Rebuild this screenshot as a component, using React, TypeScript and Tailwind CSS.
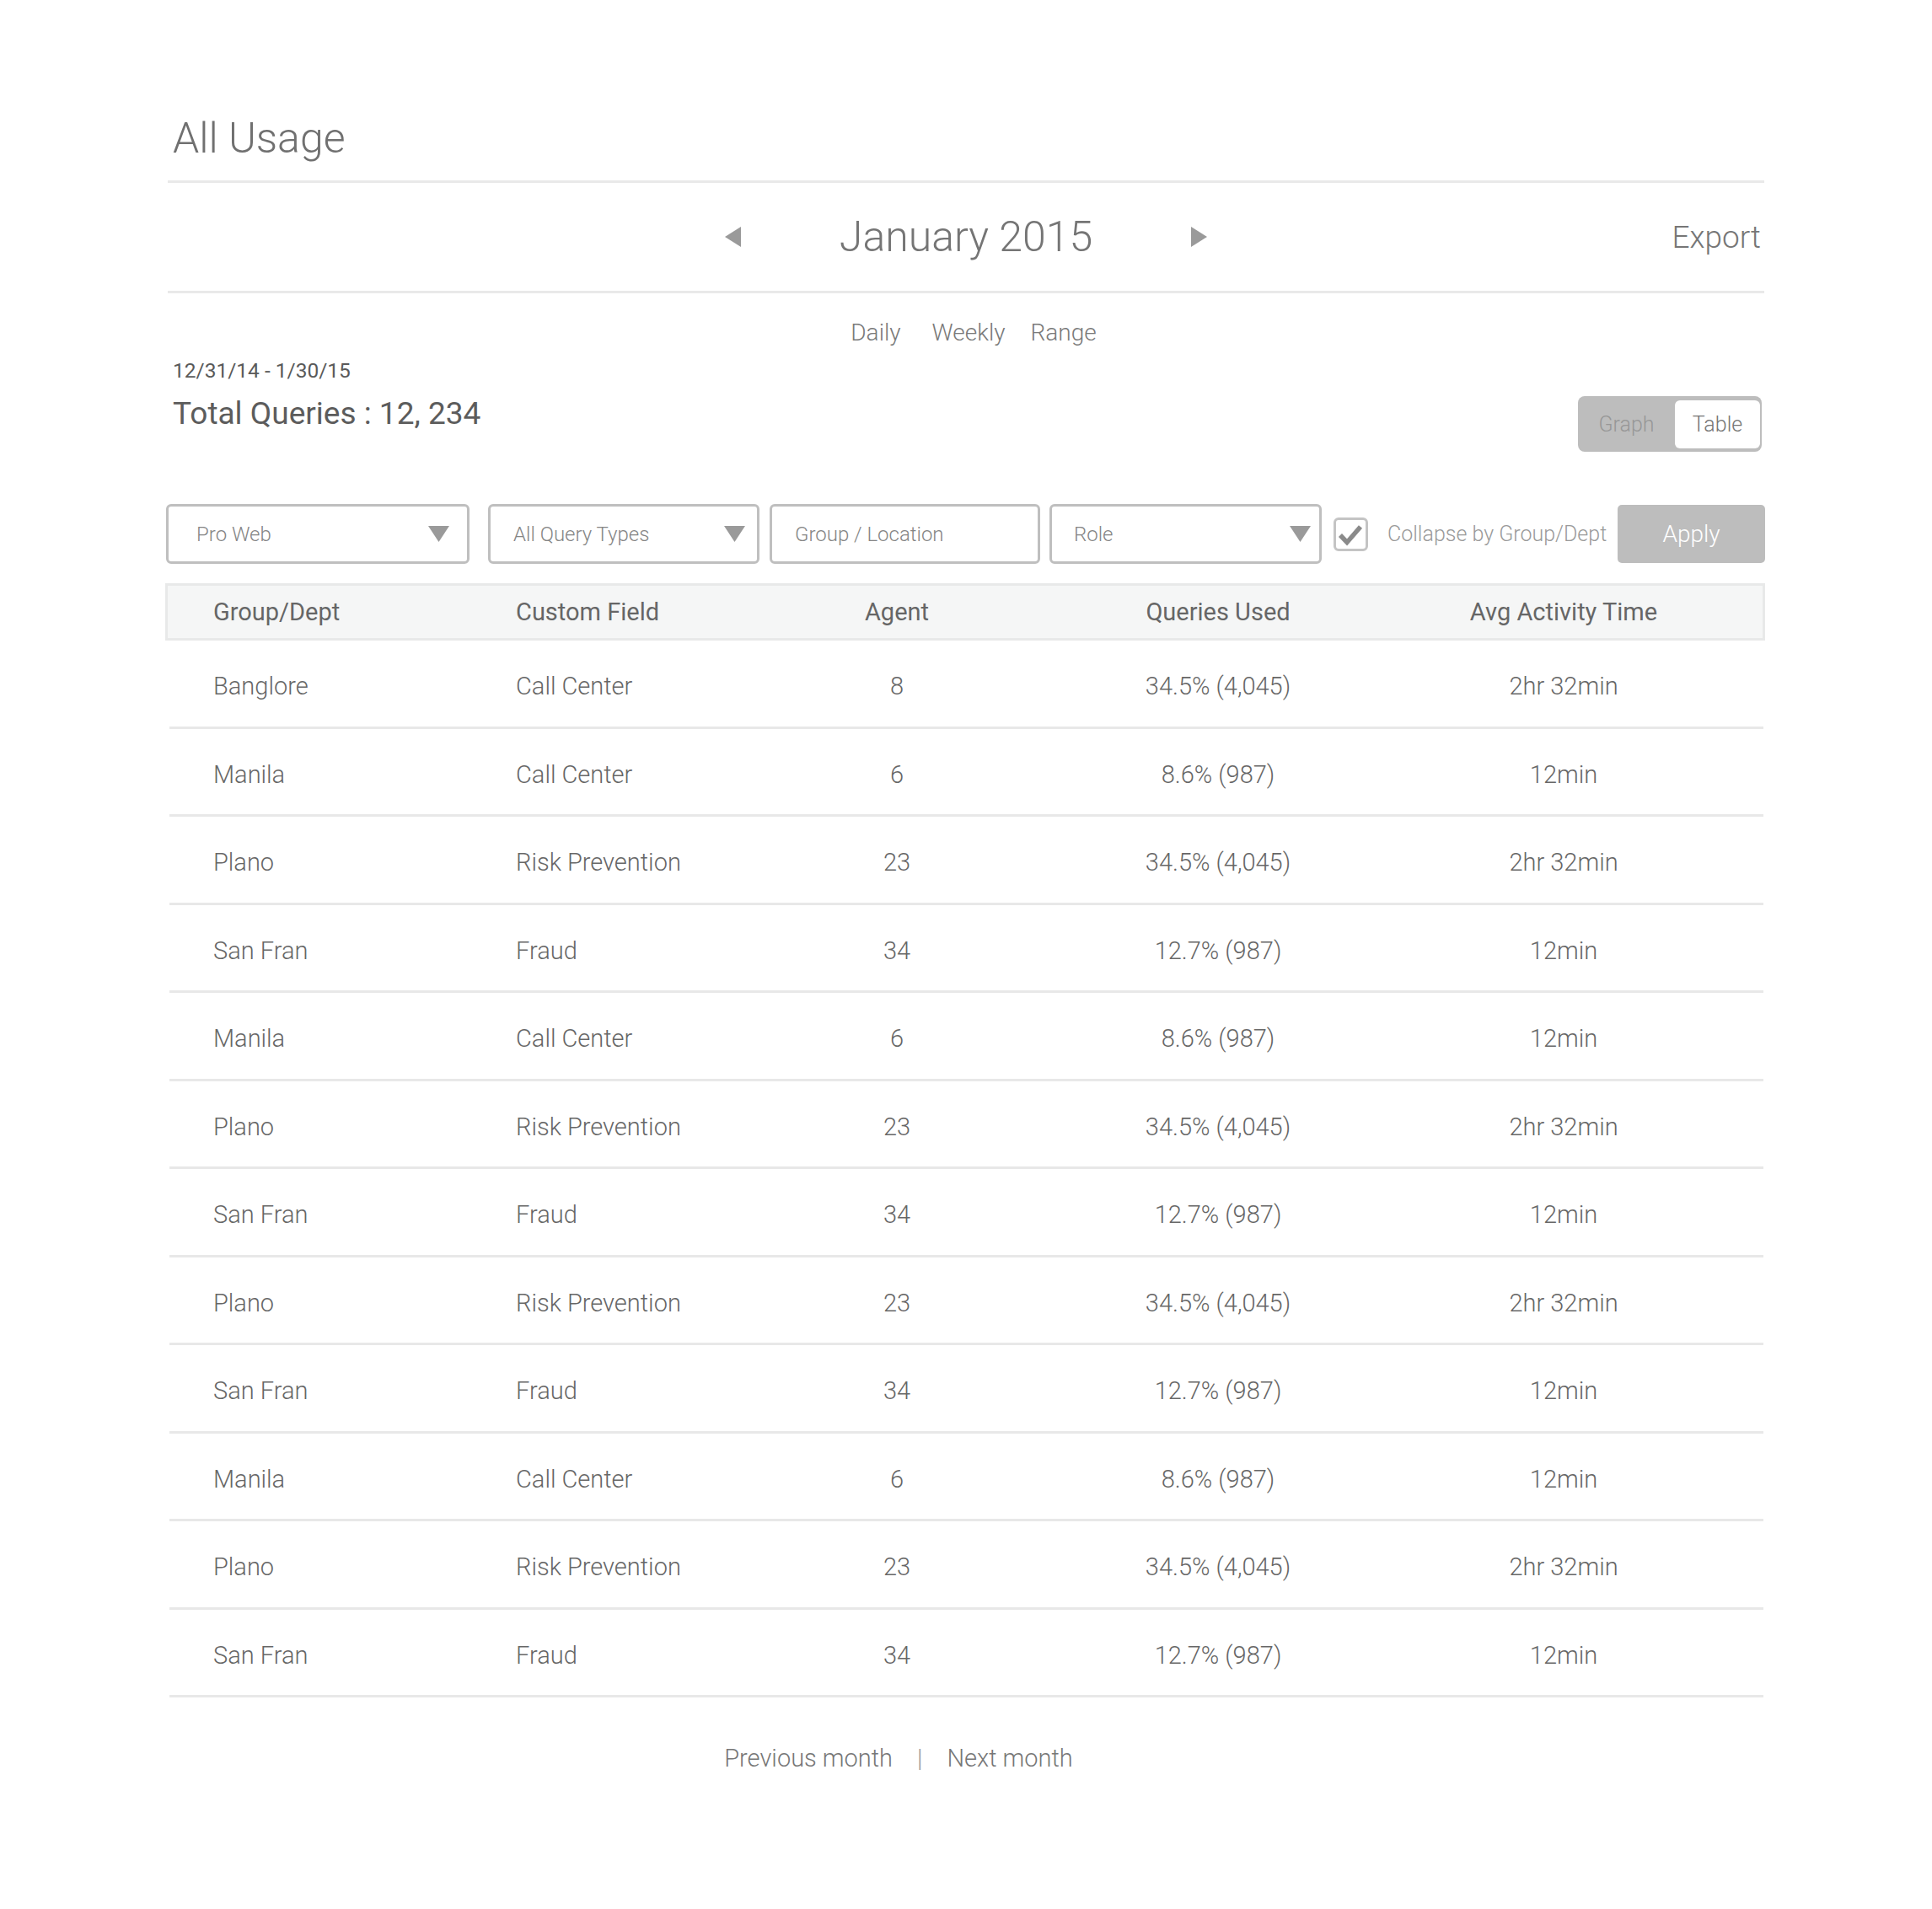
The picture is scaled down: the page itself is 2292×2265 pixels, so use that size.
import React from "react";

const rows = [
  { group: "Banglore", field: "Call Center", agent: "8", used: "34.5% (4,045)", time: "2hr 32min" },
  { group: "Manila", field: "Call Center", agent: "6", used: "8.6% (987)", time: "12min" },
  { group: "Plano", field: "Risk Prevention", agent: "23", used: "34.5% (4,045)", time: "2hr 32min" },
  { group: "San Fran", field: "Fraud", agent: "34", used: "12.7% (987)", time: "12min" },
  { group: "Manila", field: "Call Center", agent: "6", used: "8.6% (987)", time: "12min" },
  { group: "Plano", field: "Risk Prevention", agent: "23", used: "34.5% (4,045)", time: "2hr 32min" },
  { group: "San Fran", field: "Fraud", agent: "34", used: "12.7% (987)", time: "12min" },
  { group: "Plano", field: "Risk Prevention", agent: "23", used: "34.5% (4,045)", time: "2hr 32min" },
  { group: "San Fran", field: "Fraud", agent: "34", used: "12.7% (987)", time: "12min" },
  { group: "Manila", field: "Call Center", agent: "6", used: "8.6% (987)", time: "12min" },
  { group: "Plano", field: "Risk Prevention", agent: "23", used: "34.5% (4,045)", time: "2hr 32min" },
  { group: "San Fran", field: "Fraud", agent: "34", used: "12.7% (987)", time: "12min" },
];

const Caret = () => (
  <svg width="25" height="19" viewBox="0 0 25 19">
    <polygon points="0,0 25,0 12.5,19" fill="#9a9a9a" />
  </svg>
);

const Select = ({ label, className, caret = true }: { label: string; className: string; caret?: boolean }) => (
  <div
    className={`h-[71px] shrink-0 flex items-center justify-between border-[3px] border-[#bfbfbf] rounded-[6px] bg-white ${className}`}
  >
    <span className="text-[24px] leading-none font-light text-[#858585]">{label}</span>
    {caret && <Caret />}
  </div>
);

export default function App() {
  return (
    <div className="min-h-screen bg-white font-['Roboto','Liberation_Sans',sans-serif] text-[#6b6b6b]">
      <div className="mx-auto w-[1894px] pt-[139px] pb-[160px]">
        {/* Title */}
        <h1 className="pl-[6px] text-[50px] leading-none font-light text-[#707070]">All Usage</h1>

        {/* Month navigation */}
        <div className="mt-[25px] h-[134px] border-y-[3px] border-[#e9e9e9] grid grid-cols-[1fr_auto_1fr] items-center">
          <div />
          <div className="flex items-center gap-[117px]">
            <svg width="19" height="24" viewBox="0 0 19 24">
              <polygon points="19,0 19,24 0,12" fill="#9a9a9a" />
            </svg>
            <span className="text-[50px] leading-none font-light text-[#757575]">January 2015</span>
            <svg width="19" height="24" viewBox="0 0 19 24">
              <polygon points="0,0 19,12 0,24" fill="#9a9a9a" />
            </svg>
          </div>
          <div className="flex justify-end pr-[4px]">
            <span className="text-[37px] leading-none font-light text-[#767676]">Export</span>
          </div>
        </div>

        {/* Period */}
        <div className="mt-[33px] flex justify-center pl-[18px] text-[28px] leading-none font-light text-[#7a7a7a]">
          <span>Daily</span>
          <span className="ml-[37px]">Weekly</span>
          <span className="ml-[30px]">Range</span>
        </div>

        {/* Summary + view toggle */}
        <div className="mt-[19px] flex justify-between items-start">
          <div className="pl-[6px]">
            <div className="text-[24.5px] leading-none text-[#5a5a5a]">12/31/14 - 1/30/15</div>
            <div className="mt-[19px] text-[37px] leading-none text-[#5c5c5c]">Total Queries : 12, 234</div>
          </div>
          <div className="mt-[42px] mr-[3px] h-[66px] w-[218px] rounded-[8px] bg-[#bdbdbd] flex pt-[5px] pb-[4px] pr-[2px]">
            <div className="w-[115px] flex items-center justify-center text-[25px] leading-none font-light text-[#979797]">
              Graph
            </div>
            <div className="flex-1 rounded-[6px] bg-white flex items-center justify-center text-[25px] leading-none font-light text-[#757575]">
              Table
            </div>
          </div>
        </div>

        {/* Filters */}
        <div className="mt-[62px] flex items-center">
          <Select label="Pro Web" className="-ml-[2px] w-[360px] pl-[33px] pr-[21px]" />
          <Select label="All Query Types" className="ml-[22px] w-[322px] pl-[27px] pr-[14px]" />
          <Select label="Group / Location" className="ml-[12px] w-[321px] pl-[27px] pr-[14px]" caret={false} />
          <Select label="Role" className="ml-[11px] w-[323px] pl-[26px] pr-[10px]" />
          <div className="ml-[14px] w-[41px] h-[40px] shrink-0 border-[3px] border-[#c4c4c4] rounded-[6px] flex items-center justify-center">
            <svg width="35" height="34" viewBox="0 0 35 34">
              <polyline points="5,18 13,26.5 29,8" fill="none" stroke="#8a8a8a" strokeWidth="5.5" />
            </svg>
          </div>
          <span className="ml-[23px] text-[25px] leading-none font-light text-[#9a9a9a] whitespace-nowrap">
            Collapse by Group/Dept
          </span>
          <button className="ml-auto -mr-[1px] w-[175px] h-[69px] rounded-[5px] bg-[#bdbdbd] text-white text-[28px] leading-none font-light">
            Apply
          </button>
        </div>

        {/* Table */}
        <div className="mt-[23px]">
          <div className="-mx-[3px] -mr-[1px] h-[68px] border-[3px] border-[#e8e9e9] bg-[#f5f6f6] grid grid-cols-[359px_256px_392px_370px_450px] items-center pl-[54px] text-[29px] leading-none text-[#666]">
            <div>Group/Dept</div>
            <div>Custom Field</div>
            <div className="text-center">Agent</div>
            <div className="text-center">Queries Used</div>
            <div className="text-center">Avg Activity Time</div>
          </div>
          <div className="ml-[2px] mr-[1px]">
            {rows.map((r, i) => (
              <div
                key={i}
                className="h-[104.5px] pt-[8px] border-b-[3px] border-[#e8e8e8] grid grid-cols-[359px_256px_392px_370px_450px] items-center pl-[52px] text-[29px] leading-none font-light text-[#676767]"
              >
                <div>{r.group}</div>
                <div>{r.field}</div>
                <div className="text-center">{r.agent}</div>
                <div className="text-center">{r.used}</div>
                <div className="text-center">{r.time}</div>
              </div>
            ))}
          </div>
        </div>

        {/* Pager */}
        <div className="mt-[58px] flex justify-center items-center gap-[29px] pr-[160px] text-[29px] leading-none font-light text-[#777]">
          <span>Previous month</span>
          <span className="text-[#999]">|</span>
          <span>Next month</span>
        </div>
      </div>
    </div>
  );
}
